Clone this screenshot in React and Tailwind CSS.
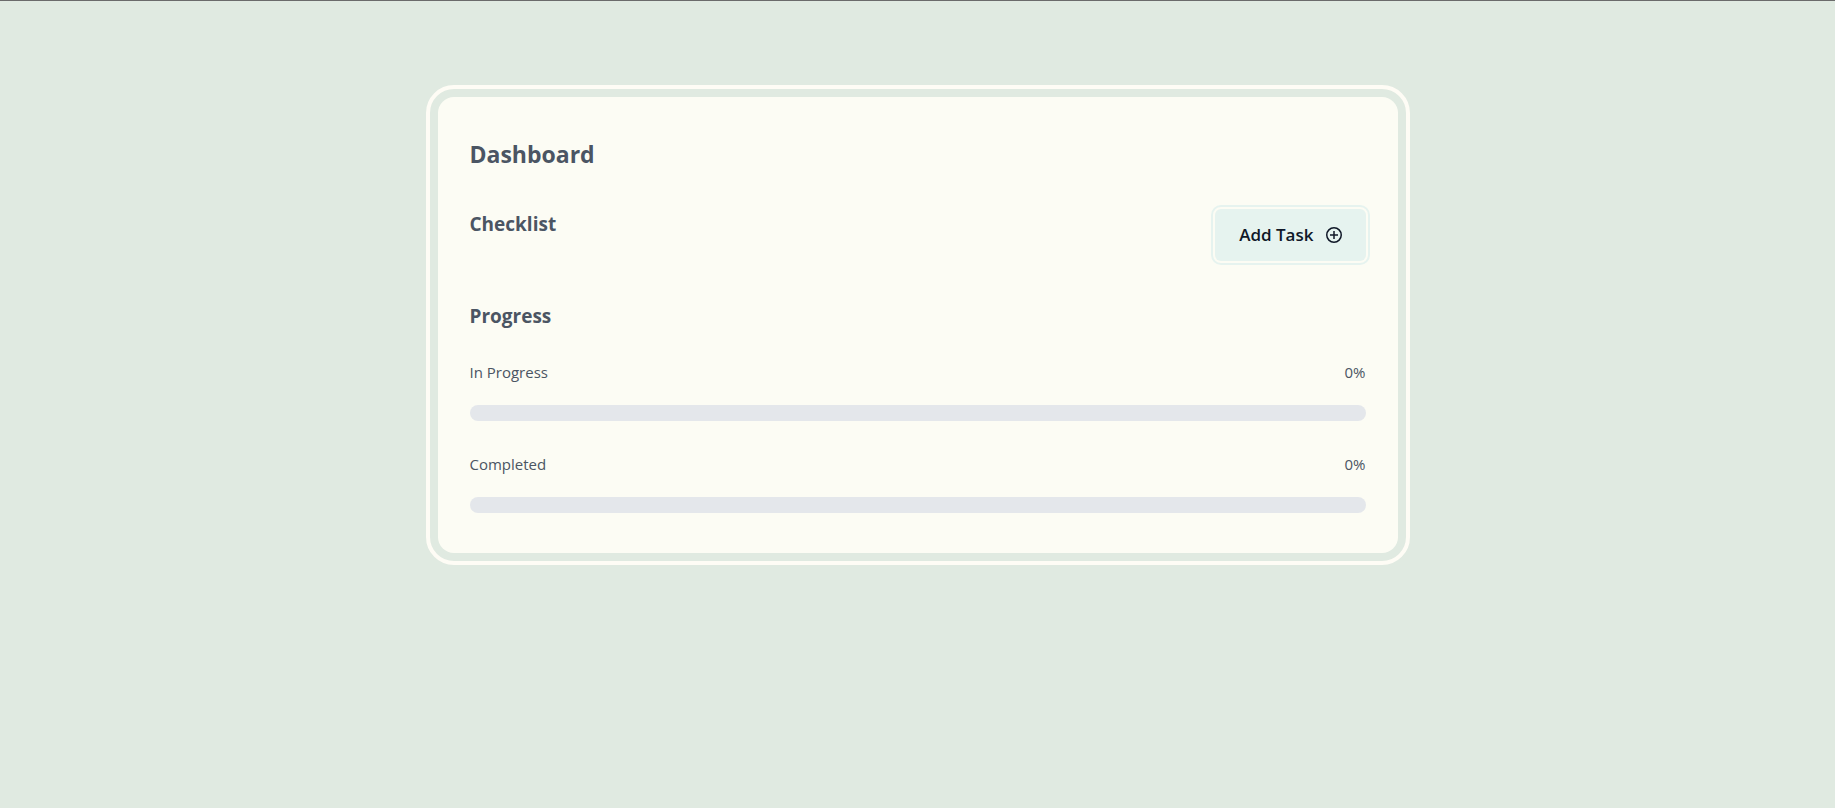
import React from "react";

const progress = [
  { id: "in-progress", label: "In Progress", value: 0 },
  { id: "completed", label: "Completed", value: 0 },
];

function PlusCircleIcon() {
  return (
    <svg aria-hidden="true" viewBox="0 0 16 16" className="size-4" fill="none" stroke="currentColor" strokeWidth="1.5">
      <circle cx="8" cy="8" r="7.25" />
      <path d="M8 4v8M4 8h8" />
    </svg>
  );
}

function ProgressRow({ id, label, value }) {
  return (
    <div>
      <div className="flex justify-between">
        <span id={id}>{label}</span>
        <span>{value}%</span>
      </div>
      <div
        role="progressbar"
        aria-labelledby={id}
        aria-valuenow={value}
        aria-valuemin={0}
        aria-valuemax={100}
        className="mt-[22px] h-4 overflow-hidden rounded-full bg-[#e4e7eb]"
      >
        <div className="h-full bg-teal-300" style={{ width: `${value}%` }} />
      </div>
    </div>
  );
}

export default function App() {
  return (
    <div className="min-h-screen border-t border-[#6b6b6b] bg-[#e0eae1] px-6 pt-24 pb-12 font-['Open_Sans','Noto_Sans',sans-serif] text-[#4b5563]">
      <main className="mx-auto max-w-[960px] rounded-2xl bg-[#fcfcf4] px-8 pt-10 pb-10 outline-4 outline-offset-8 outline-[#fefcf5]">
        <h1 className="text-[23px] leading-[34px] font-bold">Dashboard</h1>
        <section className="mt-[38px] flex items-start justify-between">
          <h2 className="text-[19px] leading-[30px] font-bold">Checklist</h2>
          <button
            type="button"
            className="flex h-13 items-center gap-3 rounded-md bg-[#e6f3ef] px-6 text-[17px] font-semibold text-gray-900 outline-2 outline-offset-2 outline-[#e6f3ef]"
          >
            Add Task
            <PlusCircleIcon />
          </button>
        </section>
        <section className="mt-10">
          <h2 className="text-[19px] leading-[30px] font-bold">Progress</h2>
          <div className="mt-[30px] flex flex-col gap-8 text-[15px] leading-[22px]">
            {progress.map((row) => (
              <ProgressRow key={row.id} {...row} />
            ))}
          </div>
        </section>
      </main>
    </div>
  );
}
